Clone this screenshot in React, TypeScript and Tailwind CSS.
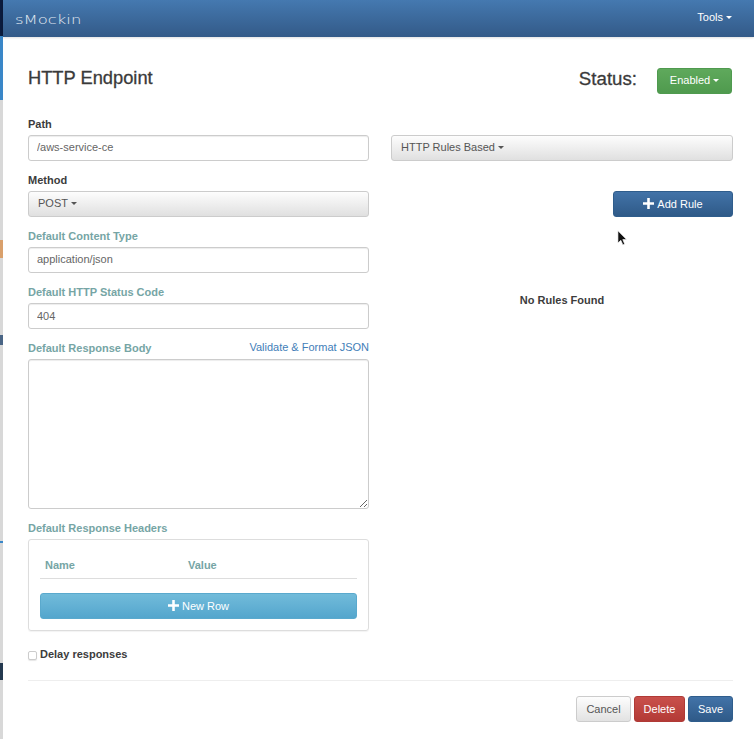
import React from "react";

const Caret: React.FC = () => (
  <span className="inline-block w-0 h-0 ml-[3px] align-middle border-t-[3px] border-x-[3px] border-x-transparent border-t-current" />
);

const Plus: React.FC = () => (
  <svg viewBox="0 0 12 12" width="11" height="11" className="mr-[3px] -mt-[1px]">
    <path d="M4.6 0h2.8v4.6H12v2.8H7.4V12H4.6V7.4H0V4.6h4.6z" fill="currentColor" />
  </svg>
);

const FieldLabel: React.FC<{ text: string; muted?: boolean }> = ({ text, muted }) => (
  <div
    className={`h-[30px] flex items-end pb-[3px] text-[11px] leading-4 font-bold ${
      muted ? "text-[#76a5a5]" : "text-[#3c3c3c]"
    }`}
  >
    {text}
  </div>
);

const TextField: React.FC<{ value: string; lift?: boolean }> = ({ value, lift }) => (
  <input
    readOnly
    value={value}
    className={`block w-full h-[26px] px-[8px] text-[11px] text-[#666] bg-white border border-[#ccc] rounded-[3px] shadow-[inset_0_1px_1px_rgba(0,0,0,0.075)] outline-none ${
      lift ? "pb-[2px]" : ""
    }`}
  />
);

const GrayDropdown: React.FC<{ text: string }> = ({ text }) => (
  <button className="flex items-center w-full h-[26px] px-[9px] pb-[2px] text-[11px] text-[#555] border border-[#ccc] rounded-[3px] bg-linear-to-b from-[#fdfdfd] to-[#e0e0e0]">
    {text}
    <Caret />
  </button>
);

const stripSegments = [
  "h-[36px] bg-[#0b1b3d]",
  "h-[64px] bg-[#3a87c8]",
  "h-[140px] bg-[#d8d8d8]",
  "h-[18px] bg-[#d9a06c]",
  "h-[77px] bg-[#d8d8d8]",
  "h-[10px] bg-[#4a6585]",
  "h-[196px] bg-[#d8d8d8]",
  "h-[2px] bg-[#3a87c8]",
  "h-[120px] bg-[#d8d8d8]",
  "h-[17px] bg-[#24394f]",
  "h-[59px] bg-[#d8d8d8]",
];

export default function App() {
  return (
    <div
      className="relative flex w-[754px] h-[739px] overflow-hidden bg-white"
      style={{ fontFamily: '"Liberation Sans", Arial, sans-serif' }}
    >
      <div className="w-[3px] shrink-0 flex flex-col">
        {stripSegments.map((cls, i) => (
          <div key={i} className={cls} />
        ))}
      </div>

      <div className="flex-1 flex flex-col min-w-0">
        <header className="h-[37px] shrink-0 flex items-center justify-between pl-[12px] pr-[22px] text-white bg-linear-to-b from-[#4579b0] to-[#335a88] shadow-[0_1px_2px_rgba(0,0,0,0.12)]">
          <span
            className="inline-block origin-left scale-x-[1.37] text-[12px] text-[#e4ebf3] mt-[2px]"
            style={{ fontFamily: '"DejaVu Sans", sans-serif', fontWeight: 300 }}
          >
            sMockin
          </span>
          <span className="text-[11px] -mt-[3px]">
            Tools
            <Caret />
          </span>
        </header>

        <main className="flex-1 flex flex-col pl-[25px] pr-[21px]">
          <div className="h-[68px] flex items-start justify-between">
            <h1 className="mt-[30px] text-[18.3px] leading-[22px] text-[#3a3a3a] [-webkit-text-stroke:0.3px_#3a3a3a]">
              HTTP Endpoint
            </h1>
            <div className="flex items-start mt-[31px] mr-[1px]">
              <span className="-mt-[1px] text-[18.7px] leading-[24px] text-[#3a3a3a] [-webkit-text-stroke:0.3px_#3a3a3a]">
                Status:
              </span>
              <button className="ml-[20px] w-[75px] h-[26px] pb-[2px] flex items-center justify-center text-[11px] text-white rounded-[3px] border border-[#4f9a4f] bg-linear-to-b from-[#5fa95c] to-[#4f9a4e]">
                Enabled
                <Caret />
              </button>
            </div>
          </div>

          <div className="flex gap-[22px]">
            <div className="w-[341px] shrink-0">
              <FieldLabel text="Path" />
              <TextField value="/aws-service-ce" lift />
              <FieldLabel text="Method" />
              <GrayDropdown text="POST" />
              <FieldLabel text="Default Content Type" muted />
              <TextField value="application/json" lift />
              <FieldLabel text="Default HTTP Status Code" muted />
              <TextField value="404" />

              <div className="flex justify-between items-end h-[30px]">
                <FieldLabel text="Default Response Body" muted />
                <a className="text-[11px] leading-4 text-[#3f7eb8] pb-[4px]">Validate &amp; Format JSON</a>
              </div>
              <textarea
                readOnly
                className="block w-full h-[150px] border border-[#ccc] rounded-[3px] shadow-[inset_0_1px_1px_rgba(0,0,0,0.075)] outline-none"
              />

              <FieldLabel text="Default Response Headers" muted />
              <div className="h-[92px] px-[11px] border border-[#ddd] rounded-[3px] shadow-[0_1px_1px_rgba(0,0,0,0.05)]">
                <div className="flex h-[39px] items-end pb-[5px] border-b border-[#ddd] text-[11px] leading-4 font-bold text-[#76a5a5]">
                  <span className="w-[148px] pl-[5px]">Name</span>
                  <span>Value</span>
                </div>
                <button className="mt-[14px] w-full h-[26px] flex items-center justify-center text-[11px] text-white rounded-[3px] border border-[#5aa9cd] bg-linear-to-b from-[#71bbda] to-[#54a6cd]">
                  <Plus />
                  New Row
                </button>
              </div>

              <label className="mt-[15px] flex items-center h-[16px] text-[11px] font-bold text-[#3c3c3c]">
                <span className="w-[9px] h-[9px] mt-[2px] mr-[3px] bg-white border border-[#ccc] rounded-[2px] shadow-[0_1px_1px_rgba(0,0,0,0.1)]" />
                Delay responses
              </label>
            </div>

            <div className="flex-1 min-w-0 flex flex-col pt-[30px]">
              <GrayDropdown text="HTTP Rules Based" />
              <div className="flex justify-end mt-[30px]">
                <button className="w-[120px] h-[26px] flex items-center justify-center text-[11px] text-white rounded-[3px] border border-[#2f5d8c] bg-linear-to-b from-[#4273a8] to-[#2f5a88]">
                  <Plus />
                  Add Rule
                </button>
              </div>
              <p className="mt-[75px] text-center text-[11px] leading-4 font-bold text-[#3c3c3c]">No Rules Found</p>
            </div>
          </div>

          <div className="mt-[18px] border-t border-[#eee]" />
          <div className="mt-[15px] flex justify-end gap-[3px] text-[11px]">
            <button className="w-[55px] h-[26px] text-[#555] rounded-[3px] border border-[#ccc] bg-linear-to-b from-[#fdfdfd] to-[#e2e2e2]">
              Cancel
            </button>
            <button className="w-[51px] h-[26px] text-white rounded-[3px] border border-[#b03a36] bg-linear-to-b from-[#c9504b] to-[#b33a36]">
              Delete
            </button>
            <button className="w-[45px] h-[26px] text-white rounded-[3px] border border-[#2f5d8c] bg-linear-to-b from-[#4273a8] to-[#2f5a88]">
              Save
            </button>
          </div>
        </main>
      </div>

      {/* mouse pointer caught in the capture */}
      <svg viewBox="0 0 12 18" width="11" height="17" className="absolute left-[617px] top-[230px]">
        <path d="M1 0.5v13.5l3.2-3 2.2 5 2-0.9-2.1-4.9h4.2z" fill="#111" stroke="#fff" strokeWidth="0.7" />
      </svg>
    </div>
  );
}
